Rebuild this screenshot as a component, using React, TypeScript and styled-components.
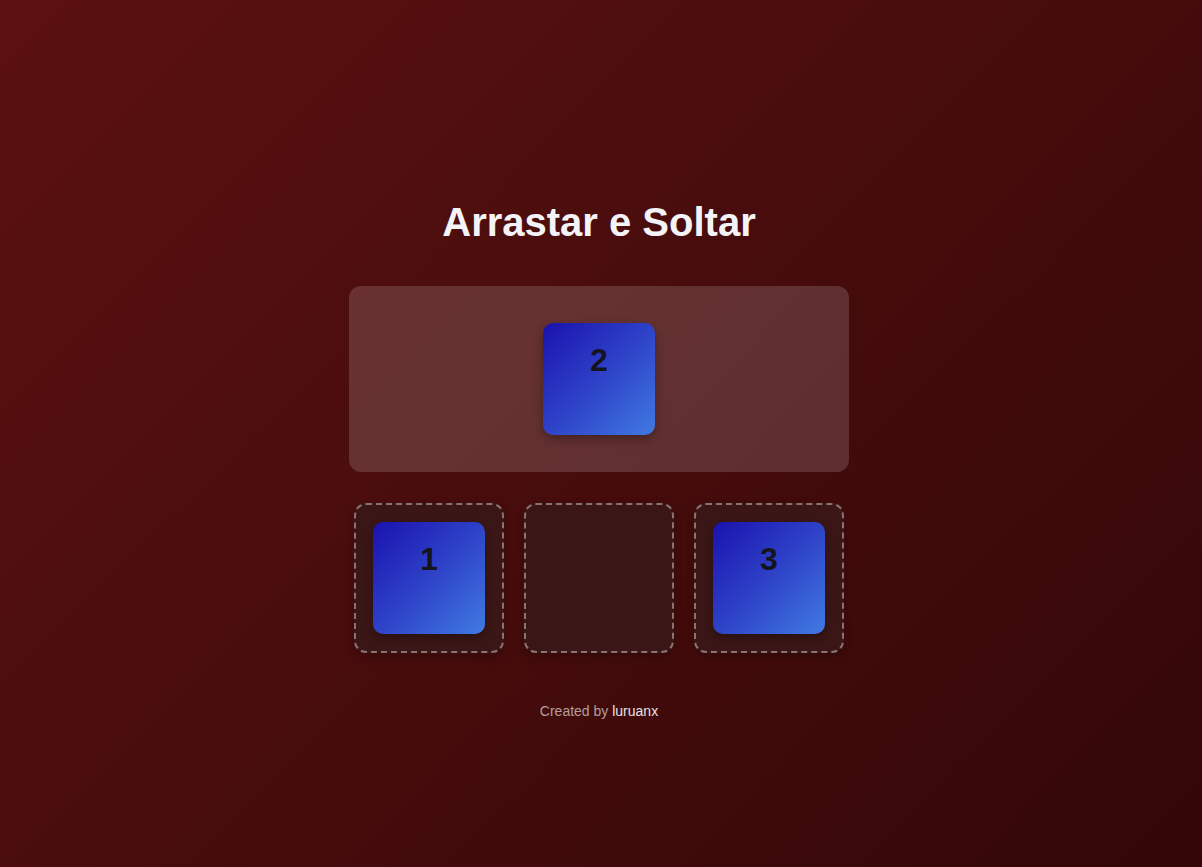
import React from "react";
import styled, { createGlobalStyle } from "styled-components";

const Global = createGlobalStyle`
  html, body { margin: 0; padding: 0; }
  body {
    min-height: 100vh;
    background: linear-gradient(135deg, #5c1111 0%, #470c0c 50%, #330707 100%);
    font-family: "Liberation Sans", Arial, sans-serif;
    color: #fff;
  }
`;

const Page = styled.main`
  min-height: 867px;
  box-sizing: border-box;
  padding: 199px 4px 0 0;
  display: flex;
  flex-direction: column;
  align-items: center;
`;

const Title = styled.h1`
  margin: 0;
  font-size: 40px;
  line-height: 46px;
  font-weight: 700;
  color: #f3f3f8;
`;

const Board = styled.section`
  margin-top: 41px;
  width: 500px;
  height: 186px;
  box-sizing: border-box;
  border-radius: 12px;
  background: rgba(255, 255, 255, 0.15);
  display: flex;
  align-items: center;
  justify-content: center;
`;

const Card = styled.div`
  width: 112px;
  height: 112px;
  box-sizing: border-box;
  padding-top: 19px;
  border-radius: 10px;
  background: linear-gradient(135deg, #1a12ae 0%, #2e42c8 50%, #407ae2 100%);
  box-shadow: 0 4px 10px rgba(0, 0, 0, 0.3);
  text-align: center;
  font-size: 32px;
  font-weight: 700;
  color: #14141c;
  cursor: grab;
`;

const Row = styled.div`
  margin-top: 31px;
  display: flex;
  gap: 20px;
`;

const Slot = styled.div`
  width: 150px;
  height: 150px;
  box-sizing: border-box;
  border: 2px dashed rgba(255, 255, 255, 0.4);
  border-radius: 12px;
  background: #3b1616;
  box-shadow: 0 4px 10px rgba(0, 0, 0, 0.2);
  display: flex;
  align-items: center;
  justify-content: center;
`;

const Footer = styled.footer`
  margin-top: 50px;
  font-size: 14px;
  line-height: 16px;
  color: rgba(255, 255, 255, 0.6);
`;

const Author = styled.span`
  color: #e6e2e6;
`;

export default function App() {
  return (
    <>
      <Global />
      <Page>
        <Title>Arrastar e Soltar</Title>
        <Board>
          <Card>2</Card>
        </Board>
        <Row>
          <Slot>
            <Card>1</Card>
          </Slot>
          <Slot />
          <Slot>
            <Card>3</Card>
          </Slot>
        </Row>
        <Footer>
          Created by <Author>luruanx</Author>
        </Footer>
      </Page>
    </>
  );
}
